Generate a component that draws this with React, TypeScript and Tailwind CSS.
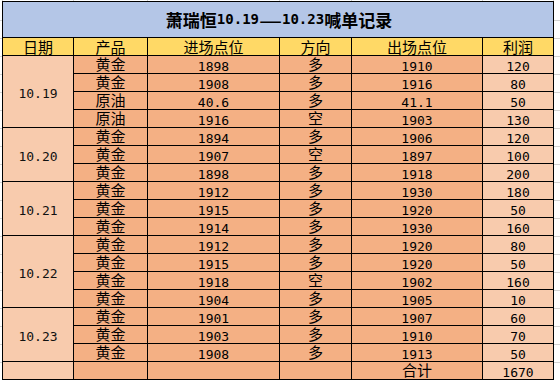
import React from "react";

type Trade = [string, string, string, string, string];

const days: { date: string; trades: Trade[] }[] = [
  {
    date: "10.19",
    trades: [
      ["黄金", "1898", "多", "1910", "120"],
      ["黄金", "1908", "多", "1916", "80"],
      ["原油", "40.6", "多", "41.1", "50"],
      ["原油", "1916", "空", "1903", "130"],
    ],
  },
  {
    date: "10.20",
    trades: [
      ["黄金", "1894", "多", "1906", "120"],
      ["黄金", "1907", "空", "1897", "100"],
      ["黄金", "1898", "多", "1918", "200"],
    ],
  },
  {
    date: "10.21",
    trades: [
      ["黄金", "1912", "多", "1930", "180"],
      ["黄金", "1915", "多", "1920", "50"],
      ["黄金", "1914", "多", "1930", "160"],
    ],
  },
  {
    date: "10.22",
    trades: [
      ["黄金", "1912", "多", "1920", "80"],
      ["黄金", "1915", "多", "1920", "50"],
      ["黄金", "1918", "空", "1902", "160"],
      ["黄金", "1904", "多", "1905", "10"],
    ],
  },
  {
    date: "10.23",
    trades: [
      ["黄金", "1901", "多", "1907", "60"],
      ["黄金", "1903", "多", "1910", "70"],
      ["黄金", "1908", "多", "1913", "50"],
    ],
  },
];

const spans: Record<number, string> = { 3: "row-span-3", 4: "row-span-4" };

function Cell({ text, light }: { text: string; light?: boolean }) {
  const cjk = /[\u4e00-\u9fff]/.test(text);
  return (
    <div
      className={`flex justify-center items-end text-black leading-none ${
        light ? "bg-[#f8cbad]" : "bg-[#f4b084]"
      } ${cjk ? "pb-[2px] text-[15px] font-['Noto_Sans_CJK_SC',sans-serif]" : "text-[13px] text-[#111] font-['DejaVu_Sans_Mono',monospace]"}`}
    >
      {text}
    </div>
  );
}

function GridStrip() {
  // faint spreadsheet gridlines beside the table
  return (
    <div className="flex flex-col">
      <div className="h-[21px] border-b border-[#d4d4d4]" />
      {Array.from({ length: 20 }).map((_, i) => (
        <div key={i} className="h-[18px] border-b border-[#d4d4d4]" />
      ))}
    </div>
  );
}

export default function App() {
  const headers = ["日期", "产品", "进场点位", "方向", "出场点位", "利润"];

  return (
    <div className="w-[560px] h-[380px] overflow-hidden bg-white flex">
      <div className="w-[2px] shrink-0">
        <GridStrip />
      </div>

      <div className="w-[552px] shrink-0 flex flex-col">
        {/* gridline stubs above the table */}
        <div className="h-[2px] grid grid-cols-[70px_73px_131px_71px_130px_70px] gap-x-px px-px bg-[#d4d4d4]">
          {headers.map((h) => (
            <div key={h} className="bg-white" />
          ))}
        </div>

        <div className="grid grid-cols-[70px_73px_131px_71px_130px_70px] grid-rows-[35px_17px_repeat(18,17px)] gap-px p-px bg-black">
          <div className="col-span-6 bg-[#b4c6e7] flex items-center justify-center pl-[2px] font-bold text-black">
            <span className="text-[17px] font-['Noto_Sans_CJK_SC',sans-serif]">萧瑞恒</span>
            <span className="text-[14px] font-['DejaVu_Sans_Mono',monospace]">10.19</span>
            <span className="inline-block w-[23px] text-center text-[17px] scale-x-[1.5] font-['Noto_Sans_CJK_SC',sans-serif]">—</span>
            <span className="text-[14px] font-['DejaVu_Sans_Mono',monospace]">10.23</span>
            <span className="text-[17px] font-['Noto_Sans_CJK_SC',sans-serif]">喊单记录</span>
          </div>

          {headers.map((h) => (
            <div
              key={h}
              className="bg-[#ffd966] flex justify-center items-end pb-[1px] leading-none text-[15px] text-black font-['Noto_Sans_CJK_SC',sans-serif]"
            >
              {h}
            </div>
          ))}

          {days.map((d) => (
            <React.Fragment key={d.date}>
              <div
                className={`${spans[d.trades.length]} bg-[#f8cbad] flex items-center justify-center pt-[4px] leading-none text-[13px] text-[#111] font-['DejaVu_Sans_Mono',monospace]`}
              >
                {d.date}
              </div>
              {d.trades.map((t, i) => (
                <React.Fragment key={i}>
                  <Cell text={t[0]} />
                  <Cell text={t[1]} />
                  <Cell text={t[2]} />
                  <Cell text={t[3]} />
                  <Cell text={t[4]} light />
                </React.Fragment>
              ))}
            </React.Fragment>
          ))}

          <Cell text="" light />
          <Cell text="" />
          <Cell text="" />
          <Cell text="" />
          <Cell text="合计" />
          <Cell text="1670" light />
        </div>
      </div>

      <div className="flex-1">
        <GridStrip />
      </div>
    </div>
  );
}
